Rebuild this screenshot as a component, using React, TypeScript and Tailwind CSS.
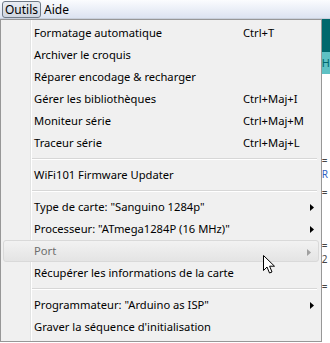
import React from "react";

type Item =
  | { kind: "item"; label: string; shortcut?: string; sub?: boolean; disabled?: boolean; hover?: boolean }
  | { kind: "sep" };

const items: Item[] = [
  { kind: "item", label: "Formatage automatique", shortcut: "Ctrl+T" },
  { kind: "item", label: "Archiver le croquis" },
  { kind: "item", label: "Réparer encodage & recharger" },
  { kind: "item", label: "Gérer les bibliothèques", shortcut: "Ctrl+Maj+I" },
  { kind: "item", label: "Moniteur série", shortcut: "Ctrl+Maj+M" },
  { kind: "item", label: "Traceur série", shortcut: "Ctrl+Maj+L" },
  { kind: "sep" },
  { kind: "item", label: "WiFi101 Firmware Updater" },
  { kind: "sep" },
  { kind: "item", label: 'Type de carte: "Sanguino 1284p"', sub: true },
  { kind: "item", label: 'Processeur: "ATmega1284P (16 MHz)"', sub: true },
  { kind: "item", label: "Port", sub: true, disabled: true, hover: true },
  { kind: "item", label: "Récupérer les informations de la carte" },
  { kind: "sep" },
  { kind: "item", label: 'Programmateur: "Arduino as ISP"', sub: true },
  { kind: "item", label: "Graver la séquence d'initialisation" },
];

function Arrow({ disabled }: { disabled?: boolean }) {
  return (
    <svg width="4" height="7" viewBox="0 0 4 7" className="absolute right-[7px] top-[8px]">
      <path d="M0 0 L4 3.5 L0 7 Z" fill={disabled ? "#a0a0a0" : "#000"} />
    </svg>
  );
}

function Cursor() {
  return (
    <svg width="14" height="20" viewBox="0 0 14 20" className="absolute left-[263px] top-[255px]">
      <path
        d="M0.5 0.5 L0.5 15.5 L4 12 L6.5 18 L9 17 L6.6 11.2 L11.5 11.2 Z"
        fill="#fff"
        stroke="#000"
        strokeWidth="1"
        strokeLinejoin="round"
      />
    </svg>
  );
}

export default function App() {
  return (
    <div
      className="relative w-[330px] h-[343px] bg-white overflow-hidden text-[11.2px] text-black"
      style={{ fontFamily: '"Noto Sans", "Liberation Sans", sans-serif' }}
    >
      {/* barre de menus */}
      <div className="flex items-center h-[19px] pl-[2px] bg-gradient-to-b from-[#fbfcfe] to-[#dce3f1] border-b border-[#c9d0dc] text-[12px]">
        <span className="h-[17px] px-[2px] leading-[15px] rounded-[3px] border border-[#6f7a86] bg-gradient-to-b from-[#e9edf3] to-[#cfd6e0]">
          Outils
        </span>
        <span className="ml-[3px] leading-[15px]">Aide</span>
      </div>

      <div className="flex">
        {/* menu déroulant */}
        <div className="relative w-[326px] h-[323px] bg-[#f0f0f0] border border-[#979797] pt-[2px]">
          <div className="absolute left-[29px] top-0 bottom-0 w-[1px] bg-[#e2e3e3]" />
          <div className="absolute left-[30px] top-0 bottom-0 w-[1px] bg-white" />
          {items.map((it, i) =>
            it.kind === "sep" ? (
              <div key={i} className="h-[10px] flex flex-col justify-center pl-[31px] pr-[4px]">
                <div className="h-[1px] bg-[#d7d7d7]" />
                <div className="h-[1px] bg-white" />
              </div>
            ) : (
              <div
                key={i}
                className={`relative flex items-center h-[22px] ${
                  it.hover
                    ? "mx-[2px] pl-[30px] rounded-[3px] border border-[#d9d9d9] bg-gradient-to-b from-[#f2f2f2] to-[#e4e4e4]"
                    : "pl-[33px]"
                } ${it.disabled ? "text-[#6d6d6d]" : ""}`}
              >
                <span className="flex-1 whitespace-nowrap">{it.label}</span>
                {it.shortcut && <span className="absolute left-[242px]">{it.shortcut}</span>}
                {it.sub && <Arrow disabled={it.disabled} />}
              </div>
            )
          )}
        </div>

        {/* fenêtre derrière */}
        <div className="flex-1 flex flex-col">
          <div className="h-[33px] bg-[#00686d]" />
          <div className="h-[22px] bg-[#5ec1c4] text-[#00686d] leading-[22px] text-[11px]">H</div>
          <div className="flex flex-col text-[10px] leading-[12px] text-[#444]">
            <span className="h-[12px] mt-[80px]">=</span>
            <span className="h-[12px] mt-[2px] text-[#3060c0]">R</span>
            <span className="h-[12px] mt-[6px]">=</span>
            <span className="h-[12px] mt-[41px]">=</span>
            <span className="h-[12px] mt-[2px]">2</span>
            <span className="h-[12px] mt-[15px]">=</span>
          </div>
        </div>
      </div>

      <Cursor />
    </div>
  );
}
